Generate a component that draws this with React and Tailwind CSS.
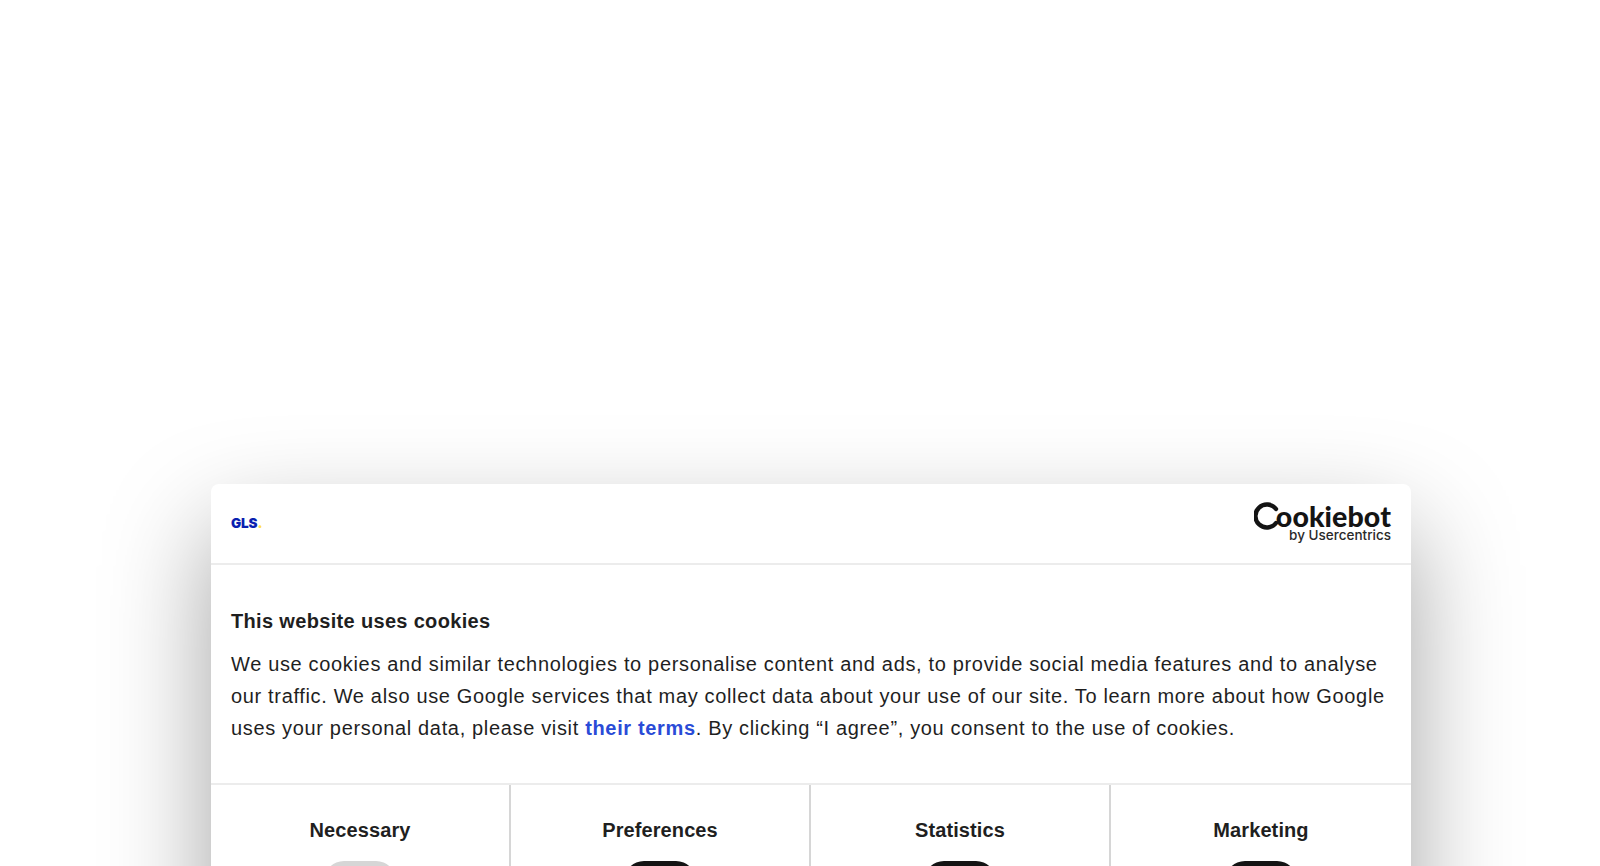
const sans = { fontFamily: '"Liberation Sans", Arial, sans-serif' };

function Toggle({ on }) {
  return (
    <div className={`mt-[11px] relative h-[40px] w-[72px] rounded-[20px] ${on ? "bg-[#141414]" : "bg-[#d6d6d6]"}`}>
      <div className="absolute left-[3px] top-[5px] h-[30px] w-[30px] rounded-full bg-white" />
    </div>
  );
}

function Cell({ label, on, last }) {
  return (
    <div className={`flex w-[300px] flex-col items-center pt-[25px] ${last ? "" : "border-r-2 border-[#d6d6d6]"}`}>
      <div className="text-[20px] font-bold leading-[40px] tracking-[0.1px] text-[#1f1f1f]">{label}</div>
      <Toggle on={on} />
    </div>
  );
}

export default function App() {
  return (
    <div className="flex h-[866px] w-full overflow-hidden bg-white pl-[211px] pt-[484px]" style={sans}>
      <div className="h-[600px] w-[1200px] shrink-0 rounded-t-[8px] bg-white shadow-[0_46px_104px_rgba(0,0,0,0.37)]">
        <div className="flex h-[81px] items-center justify-between border-b-2 border-[#ececec] px-[20px]">
          <div className="flex items-baseline text-[13.5px] font-black leading-none tracking-[-0.1px] text-[#0a1fb0]" style={{ fontFamily: "Inter, sans-serif" }}>
            GLS<span className="text-[#ffe14d]">.</span>
          </div>
          <div className="mt-[-3px] flex flex-col items-end text-[#141414]">
            <div className="flex items-center text-[28.5px] font-black leading-[27px] tracking-[0.1px]" style={{ fontFamily: "Lato, sans-serif" }}>
              <svg width="26" height="28" viewBox="0 0 26 28" className="mr-[-4px]">
                <path d="M22 7A11.5 11.5 0 1 0 22 21" fill="none" stroke="#141414" strokeWidth="4.4" strokeLinecap="round" />
              </svg>
              ookiebot
            </div>
            <div className="mt-[-2px] text-[13.5px] font-medium leading-[14px] text-[#2a2a2a]" style={{ fontFamily: "Inter, sans-serif" }}>by Usercentrics</div>
          </div>
        </div>
        <div className="h-[220px] border-b-2 border-[#ececec] px-[20px] pt-[40px]">
          <div className="text-[20px] font-bold leading-[32px] tracking-[0.33px] text-[#1f1f1f]">This website uses cookies</div>
          <p className="mt-[11px] text-[20px] leading-[32px] tracking-[0.66px] text-[#1f1f1f]">
            We use cookies and similar technologies to personalise content and ads, to provide social media features and to analyse our traffic. We also use Google services that may collect data about your use of our site. To learn more about how Google uses your personal data, please visit <span className="font-bold text-[#2a4bd7]">their terms</span>. By clicking “I agree”, you consent to the use of cookies.
          </p>
        </div>
        <div className="flex">
          <Cell label="Necessary" on={false} />
          <Cell label="Preferences" on />
          <Cell label="Statistics" on />
          <Cell label="Marketing" on last />
        </div>
      </div>
    </div>
  );
}
